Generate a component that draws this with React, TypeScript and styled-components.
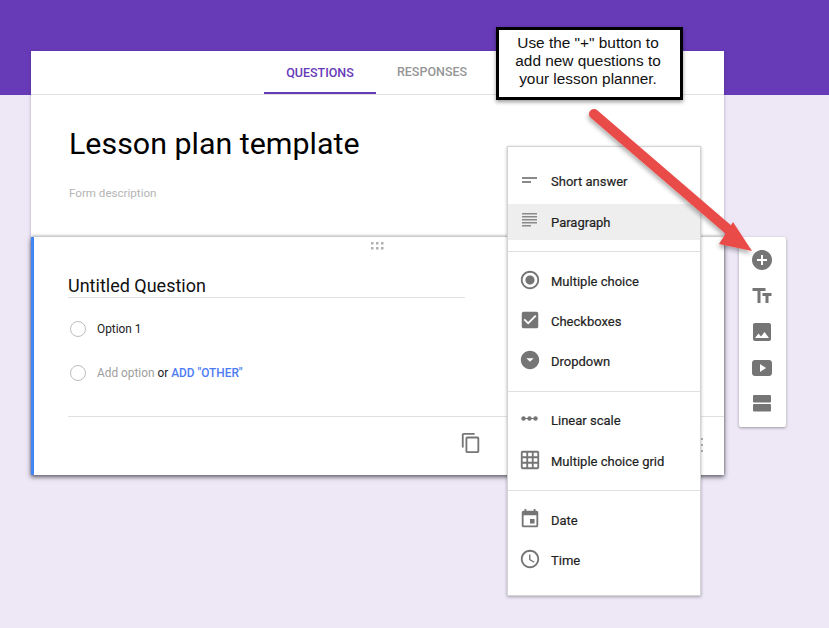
import React from "react";
import styled, { createGlobalStyle } from "styled-components";
import {
  MdAccessTime,
  MdAddCircle,
  MdArrowDropDownCircle,
  MdCheckBox,
  MdContentCopy,
  MdEvent,
  MdPhoto,
  MdRadioButtonChecked,
  MdTextFields,
} from "react-icons/md";

const GlobalStyle = createGlobalStyle`
  html, body {
    margin: 0;
    padding: 0;
    background: #ede7f6;
  }
  * {
    box-sizing: border-box;
  }
`;

const Page = styled.div`
  position: relative;
  width: 829px;
  height: 628px;
  overflow: hidden;
  padding: 51px 0 0 31px;
  background: linear-gradient(#673ab7 95px, #ede7f6 95px);
  font-family: Roboto, "Liberation Sans", sans-serif;
`;

const FormColumn = styled.div`
  width: 693px;
  display: flex;
  flex-direction: column;
  box-shadow: 0 1px 3px rgba(60, 50, 90, 0.35);
`;

const HeaderCard = styled.div`
  height: 186px;
  background: #fff;
  display: flex;
  flex-direction: column;
`;

const Tabs = styled.div`
  height: 44px;
  padding-left: 233px;
  display: flex;
  border-bottom: 1px solid #e0e0e0;
`;

const Tab = styled.div<{ $active?: boolean }>`
  width: 112px;
  height: 43px;
  display: flex;
  align-items: center;
  justify-content: center;
  padding-top: ${(p) => (p.$active ? "2px" : "0")};
  font-size: 12.5px;
  font-weight: 500;
  color: ${(p) => (p.$active ? "#673ab7" : "#969696")};
  border-bottom: 2px solid ${(p) => (p.$active ? "#673ab7" : "transparent")};
`;

const HeaderBody = styled.div`
  padding: 28px 38px 0;
`;

const Title = styled.div`
  font-size: 30.4px;
  line-height: 42px;
  color: #000;
`;

const Description = styled.div`
  margin-top: 21px;
  font-size: 11.6px;
  line-height: 14px;
  color: #b4b4b4;
`;

const QuestionCard = styled.div`
  position: relative;
  height: 238px;
  background: #fff;
  border-left: 3px solid #4285f4;
  padding: 37px 0 0 34px;
  box-shadow: 0 -2px 2px rgba(0, 0, 0, 0.14), 0 2px 5px rgba(0, 0, 0, 0.5);
  display: flex;
  flex-direction: column;
`;

const DragHandle = styled.svg`
  position: absolute;
  top: 5px;
  left: 336px;
`;

const QuestionTitle = styled.div`
  width: 397px;
  height: 24px;
  font-size: 18px;
  line-height: 23px;
  color: #111;
  border-bottom: 1px solid #e0e0e0;
`;

const OptionRow = styled.div`
  display: flex;
  align-items: center;
  gap: 11px;
  height: 18px;
  padding-left: 2px;
  font-size: 11.85px;
`;

const Radio = styled.span`
  width: 16px;
  height: 16px;
  border: 1px solid #bdbdbd;
  border-radius: 50%;
`;

const OptionList = styled.div`
  margin-top: 22px;
  display: flex;
  flex-direction: column;
  gap: 26px;
`;

const OptionText = styled.span<{ $tone: "dark" | "muted" | "link" }>`
  color: ${(p) =>
    p.$tone === "dark" ? "#222" : p.$tone === "muted" ? "#9e9e9e" : "#4d7cf5"};
  font-weight: ${(p) => (p.$tone === "link" ? 500 : 400)};
`;

const CardFooter = styled.div`
  margin-top: 34px;
  height: 59px;
  border-top: 1px solid #e0e0e0;
  padding: 15px 0 0 392px;
  color: #757575;
  display: flex;
  gap: 218px;
`;

const MoreDots = styled.svg`
  margin-top: 5px;
`;

const Callout = styled.div`
  position: absolute;
  top: 27px;
  left: 496px;
  width: 187px;
  height: 73px;
  padding: 4px 3px 0 0;
  border: 3px solid #000;
  background: #fff;
  color: #111;
  text-align: center;
  font-family: "Liberation Sans", Arial, sans-serif;
  font-size: 15.4px;
  line-height: 18px;
  box-shadow: 0 2px 4px rgba(0, 0, 0, 0.4);
`;

const ArrowLayer = styled.svg`
  position: absolute;
  top: 0;
  left: 0;
  z-index: 2;
  pointer-events: none;
`;

const Menu = styled.div`
  position: absolute;
  top: 146px;
  left: 507px;
  width: 194px;
  height: 450px;
  background: #fff;
  border: 1px solid #d4d4d4;
  box-shadow: 0 1px 3px rgba(0, 0, 0, 0.3);
  z-index: 1;
`;

const MenuGroup = styled.div<{ $top: number; $bottom: number; $gap: number }>`
  display: flex;
  flex-direction: column;
  gap: ${(p) => p.$gap}px;
  padding: ${(p) => p.$top}px 0 ${(p) => p.$bottom}px;
  & + & {
    border-top: 1px solid #e0e0e0;
  }
`;

const MenuRow = styled.div<{ $selected?: boolean }>`
  height: 36px;
  display: flex;
  align-items: center;
  gap: 10px;
  padding-left: 11px;
  background: ${(p) => (p.$selected ? "#eeeeee" : "transparent")};
  font-size: 13px;
  font-weight: 400;
  color: #1f1f1f;
  -webkit-text-stroke: 0.2px #1f1f1f;
`;

const IconBox = styled.span`
  width: 22px;
  height: 22px;
  display: flex;
  align-items: center;
  justify-content: center;
  color: #757575;
  margin-top: -2px;
  font-size: 22px;
  -webkit-text-stroke: 0;
`;

const SideBar = styled.div`
  position: absolute;
  top: 237px;
  left: 739px;
  width: 47px;
  height: 190px;
  padding: 11px 2px 0 0;
  background: #fff;
  border-radius: 2px;
  box-shadow: 0 1px 3px rgba(0, 0, 0, 0.35);
  display: flex;
  flex-direction: column;
  align-items: center;
  gap: 12px;
  color: #757575;
  font-size: 24px;
`;

const SideIcon = styled.span`
  width: 24px;
  height: 24px;
  display: flex;
  align-items: center;
  justify-content: center;
`;

const ShortAnswerIcon = () => (
  <svg width="22" height="22" viewBox="0 0 22 22" fill="#8a8a8a">
    <rect x="3" y="8" width="15" height="2" />
    <rect x="3" y="12" width="9" height="2" />
  </svg>
);

const ParagraphIcon = () => (
  <svg width="22" height="22" viewBox="0 0 22 22" fill="#8a8a8a">
    <rect x="3" y="3" width="15" height="1.5" />
    <rect x="3" y="6" width="15" height="1.5" />
    <rect x="3" y="9" width="15" height="1.5" />
    <rect x="3" y="12" width="15" height="1.5" />
    <rect x="3" y="15" width="9" height="1.5" />
  </svg>
);

const LinearScaleIcon = () => (
  <svg width="22" height="22" viewBox="0 0 22 22" fill="currentColor">
    <rect x="3" y="10" width="15" height="1" />
    <circle cx="4.5" cy="10.5" r="2.2" />
    <circle cx="10.5" cy="10.5" r="2.2" />
    <circle cx="16.5" cy="10.5" r="2.2" />
  </svg>
);

const GridIcon = () => (
  <svg width="22" height="22" viewBox="0 0 24 24" fill="currentColor">
    <path d="M20 2H4c-1.1 0-2 .9-2 2v16c0 1.1.9 2 2 2h16c1.1 0 2-.9 2-2V4c0-1.1-.9-2-2-2zM8 20H4v-4h4v4zm0-6H4v-4h4v4zm0-6H4V4h4v4zm6 12h-4v-4h4v4zm0-6h-4v-4h4v4zm0-6h-4V4h4v4zm6 12h-4v-4h4v4zm0-6h-4v-4h4v4zm0-6h-4V4h4v4z" />
  </svg>
);

const VideoIcon = () => (
  <svg width="24" height="24" viewBox="0 0 24 24" fill="currentColor">
    <path d="M5 4h14c1.7 0 3 1.3 3 3v10c0 1.7-1.3 3-3 3H5c-1.7 0-3-1.3-3-3V7c0-1.7 1.3-3 3-3zm5 4v8l6-4-6-4z" fillRule="evenodd" />
  </svg>
);

const SectionIcon = () => (
  <svg width="24" height="24" viewBox="0 0 24 24" fill="currentColor">
    <rect x="3" y="3" width="18" height="7.5" rx="1" />
    <rect x="3" y="12" width="18" height="7.5" rx="1" />
  </svg>
);

const dotGrid = [0, 5, 10].flatMap((x) => [0, 5].map((y) => ({ x, y })));

export default function App() {
  return (
    <>
      <GlobalStyle />
      <Page>
        <FormColumn>
          <HeaderCard>
            <Tabs>
              <Tab $active>QUESTIONS</Tab>
              <Tab>RESPONSES</Tab>
            </Tabs>
            <HeaderBody>
              <Title>Lesson plan template</Title>
              <Description>Form description</Description>
            </HeaderBody>
          </HeaderCard>
          <QuestionCard>
            <DragHandle width="14" height="8" viewBox="0 0 14 8" fill="#b0b0b0">
              {dotGrid.map((d) => (
                <rect key={`${d.x}-${d.y}`} x={d.x + 1} y={d.y} width="2.5" height="2.5" />
              ))}
            </DragHandle>
            <QuestionTitle>Untitled Question</QuestionTitle>
            <OptionList>
              <OptionRow>
                <Radio />
                <OptionText $tone="dark">Option 1</OptionText>
              </OptionRow>
              <OptionRow>
                <Radio />
                <span>
                  <OptionText $tone="muted">Add option</OptionText>
                  <OptionText $tone="dark"> or </OptionText>
                  <OptionText $tone="link">ADD "OTHER"</OptionText>
                </span>
              </OptionRow>
            </OptionList>
            <CardFooter>
              <MdContentCopy size={22} />
              <MoreDots width="4" height="16" viewBox="0 0 4 16" fill="#9e9e9e">
                <circle cx="2" cy="2" r="1" />
                <circle cx="2" cy="8" r="1" />
                <circle cx="2" cy="14" r="1" />
              </MoreDots>
            </CardFooter>
          </QuestionCard>
        </FormColumn>

        <Callout>
          Use the "+" button to
          <br />
          add new questions to
          <br />
          your lesson planner.
        </Callout>

        <Menu>
          <MenuGroup $top={16} $bottom={11} $gap={5}>
            <MenuRow>
              <IconBox><ShortAnswerIcon /></IconBox>
              Short answer
            </MenuRow>
            <MenuRow $selected>
              <IconBox><ParagraphIcon /></IconBox>
              Paragraph
            </MenuRow>
          </MenuGroup>
          <MenuGroup $top={11} $bottom={12} $gap={4}>
            <MenuRow>
              <IconBox><MdRadioButtonChecked /></IconBox>
              Multiple choice
            </MenuRow>
            <MenuRow>
              <IconBox><MdCheckBox /></IconBox>
              Checkboxes
            </MenuRow>
            <MenuRow>
              <IconBox><MdArrowDropDownCircle /></IconBox>
              Dropdown
            </MenuRow>
          </MenuGroup>
          <MenuGroup $top={10} $bottom={11} $gap={5}>
            <MenuRow>
              <IconBox><LinearScaleIcon /></IconBox>
              Linear scale
            </MenuRow>
            <MenuRow>
              <IconBox><GridIcon /></IconBox>
              Multiple choice grid
            </MenuRow>
          </MenuGroup>
          <MenuGroup $top={11} $bottom={17} $gap={4}>
            <MenuRow>
              <IconBox><MdEvent /></IconBox>
              Date
            </MenuRow>
            <MenuRow>
              <IconBox><MdAccessTime /></IconBox>
              Time
            </MenuRow>
          </MenuGroup>
        </Menu>

        <SideBar>
          <SideIcon><MdAddCircle /></SideIcon>
          <SideIcon><MdTextFields /></SideIcon>
          <SideIcon><MdPhoto /></SideIcon>
          <SideIcon><VideoIcon /></SideIcon>
          <SideIcon><SectionIcon /></SideIcon>
        </SideBar>

        <ArrowLayer width="829" height="628" viewBox="0 0 829 628">
          <defs>
            <filter id="arrowShadow" x="-20%" y="-20%" width="140%" height="140%">
              <feDropShadow dx="-1" dy="3" stdDeviation="2" floodColor="#000" floodOpacity="0.3" />
            </filter>
          </defs>
          <g filter="url(#arrowShadow)">
            <path d="M594 114L730 231" stroke="#e94b48" strokeWidth="10" strokeLinecap="round" fill="none" />
            <path d="M752 251L719 244L733 222Z" fill="#e94b48" />
          </g>
        </ArrowLayer>
      </Page>
    </>
  );
}
